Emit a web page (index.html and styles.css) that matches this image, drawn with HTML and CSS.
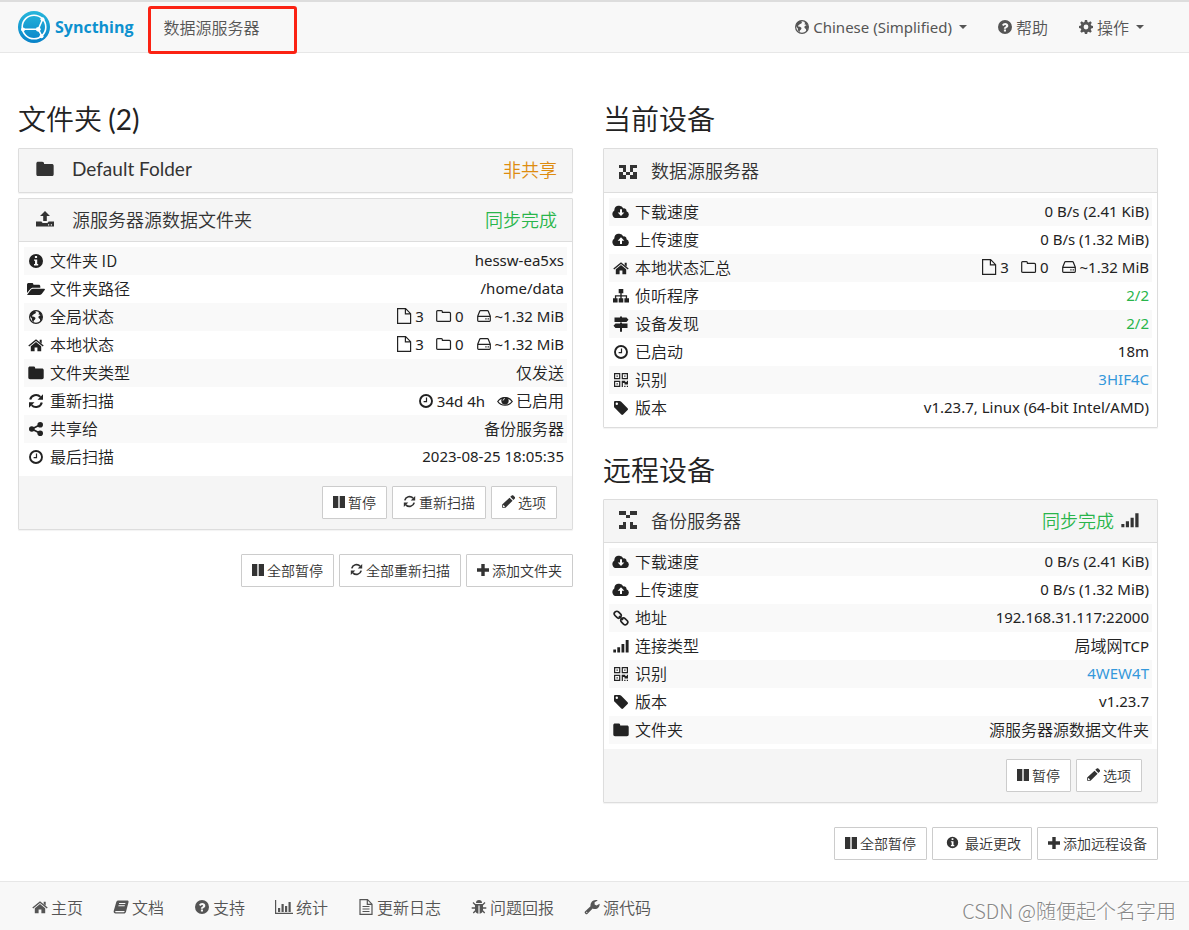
FILE: index.html
```html
<!DOCTYPE html>
<html lang="zh-CN">
<head>
<meta charset="utf-8">
<title>数据源服务器 | Syncthing</title>
<meta name="viewport" content="width=device-width, initial-scale=1">
<link rel="stylesheet" href="styles.css">
</head>
<body>
<svg class="sprite" aria-hidden="true">
  <defs>
    <linearGradient id="logo-fill" x1="0" y1="0" x2="0" y2="1"><stop offset="0" stop-color="#26b6db"/><stop offset="1" stop-color="#0882c8"/></linearGradient>
  </defs>
  <symbol id="globe" viewBox="0 0 16 16"><circle cx="8" cy="8" r="6.400" fill="none" stroke="currentColor" stroke-width="1.200"/><path d="M2.500 4.500 5 2l3-.4-.8 1.300 1 .6-1.200 1.300-1.300.3-.6 1.200-1.200.2.300 1 1.900.2 1.500 1.400-.6 1.500-1.100.9-.4 1.700-1.600-2V9.600L2.500 8 1.900 6.500z"/><path d="M10.500 2.200l2.500 1.900 1.300 3.400-.7 3.200-1.300 1.500-.4-2.100-1.300-1.100-.2-1.300.8-1 1.200-.1-.7-1-1.100.1.300-1.300z"/></symbol>
  <symbol id="info" viewBox="0 0 16 16"><path fill-rule="evenodd" d="M8 1a7 7 0 1 1 0 14A7 7 0 0 1 8 1zM6.900 2.900v2h2.200v-2zM6 6.500v1.300h1v3.300H6v1.400h4.200v-1.400H9.200V6.500z"/></symbol>
  <symbol id="question" viewBox="0 0 16 16"><path fill-rule="evenodd" d="M8 1a7 7 0 1 1 0 14A7 7 0 0 1 8 1zM5 6l1.700 1c.4-.8.8-1.100 1.400-1.100.6 0 1 .3 1 .8 0 .5-.4.700-.9 1.100-.9.500-1.300 1-1.300 2h2.100c0-.4.400-.7.900-1 .8-.5 1.400-1.100 1.400-2.100C11.300 5 9.900 4 8.200 4 6.700 4 5.700 4.700 5 6zM6.900 10.600v2H9v-2z"/></symbol>
  <symbol id="gear" viewBox="0 0 16 16"><path fill-rule="evenodd" d="M6.900 1h2.200l.4 1.900 1.200.5 1.600-1.100 1.500 1.500-1.100 1.600.5 1.200 1.800.4v2.100l-1.800.4-.5 1.200 1.100 1.600-1.500 1.500-1.600-1.100-1.200.5-.4 1.800H6.900l-.4-1.800-1.200-.5-1.600 1.100-1.500-1.500 1.100-1.600-.5-1.200L1 9.100V7l1.800-.4.500-1.200-1.100-1.600 1.500-1.500 1.600 1.100 1.200-.5zM8 5.600a2.400 2.400 0 1 0 0 4.800 2.400 2.400 0 0 0 0-4.800z"/></symbol>
  <symbol id="folder" viewBox="0 0 16 16"><path d="M2 1.500h3.500C6.600 1.500 7.200 2.100 7.200 3.500H14c1 0 1.700.6 1.700 1.600v7.500c0 1-.7 1.700-1.700 1.700H2c-1 0-1.700-.7-1.700-1.700V3.100C.3 2.100 1 1.500 2 1.500z"/></symbol>
  <symbol id="folder-open" viewBox="0 0 18 16"><path d="M0 11.900V3.500C0 2.600.700 2 1.600 2h3.300c1 0 1.500.6 1.500 1.600v.2h5.300c1 0 1.600.6 1.600 1.600v1.400H6.200c-1.300 0-2.500.6-3.300 1.700z"/><path d="M0 13.900 3.600 9c.6-.8 1.500-1.200 2.500-1.200h11c.8 0 1.100.5.600 1.200l-3 4c-.6.7-1.400 1-2.400 1H.400z"/></symbol>
  <symbol id="home" viewBox="0 0 16 16"><path d="M8 2.200 15.700 8.500l-.9 1L8 4 1.200 9.500l-.9-1z"/><path d="M11.700 2.800h2v4l-2-1.700zM8 5l5.200 4.300v4.900H9.400v-3.600H6.600v3.600H2.800V9.300z"/></symbol>
  <symbol id="refresh" viewBox="0 0 16 16"><path d="M2.200 6.600A6 6 0 0 1 12.400 3.900M13.800 9.400A6 6 0 0 1 3.600 12.100" fill="none" stroke="currentColor" stroke-width="2.100"/><path d="M15 1.300v5.500H9.500zM1 14.700V9.200h5.500z"/></symbol>
  <symbol id="share" viewBox="0 0 16 16"><path d="m12.200 3.800-8.400 4.200 8.400 4.200" fill="none" stroke="currentColor" stroke-width="1.700"/><circle cx="12.200" cy="3.800" r="2.800"/><circle cx="3.800" cy="8" r="2.800"/><circle cx="12.200" cy="12.200" r="2.800"/></symbol>
  <symbol id="clock" viewBox="0 0 16 16"><circle cx="8" cy="8" r="6" fill="none" stroke="currentColor" stroke-width="1.900"/><path d="M8.500 4.500v4.200H5.600" fill="none" stroke="currentColor" stroke-width="1.200"/></symbol>
  <symbol id="cloud-down" viewBox="0 0 18 16"><path fill-rule="evenodd" d="M4.500 14A4 4 0 0 1 2.300 6.600 4.800 4.800 0 0 1 11.400 4.400 2.600 2.600 0 0 1 14.500 7.300 3.500 3.500 0 0 1 14.200 14zM8 5.200v3.300H5.700L9 12l3.300-3.500H10V5.200z"/></symbol>
  <symbol id="cloud-up" viewBox="0 0 18 16"><path fill-rule="evenodd" d="M4.500 14A4 4 0 0 1 2.300 6.600 4.800 4.800 0 0 1 11.400 4.400 2.600 2.600 0 0 1 14.500 7.300 3.500 3.500 0 0 1 14.200 14zM8 12V8.700H5.700L9 5.200l3.300 3.500H10V12z"/></symbol>
  <symbol id="sitemap" viewBox="0 0 16 16"><path d="M5.700 1h4.600v4.300H8.700v2h5.400v3H16v4.200h-4.600v-4.200h1.400V8.500H8.700v1.800h1.600v4.200H5.700v-4.200h1.600V8.500H3.200v1.800h1.400v4.200H0v-4.200h1.900v-3h5.400v-2H5.700z"/></symbol>
  <symbol id="signs" viewBox="0 0 16 16"><path d="M7 .500h2V1.500h4.500L15.500 3.700l-2 2.200h-12V1.500H7zM7 6.500h2V7.500h5.500v4.400H9v3.900H7V11.900H2.500L.500 9.700l2-2.200H7z"/></symbol>
  <symbol id="qr" viewBox="0 0 16 16"><path fill-rule="evenodd" d="M1 1h6.300v6.300H1zM2.200 2.200V6.100H6.100V2.200zM8.700 1H15v6.300H8.700zM9.900 2.200V6.100h3.900V2.200zM1 8.700h6.300V15H1zM2.200 9.900v3.900H6.100V9.900zM3.500 3.500h1.300v1.300H3.500zM11.200 3.500h1.300v1.300h-1.300zM3.500 11.200h1.300v1.300H3.500zM8.700 8.700h3.600v1.200h1.500V8.700H15v3.700h-3.500v-1.300H9.900V15H8.700zM11.200 13.800h1.300V15h-1.300zM13.800 13.800H15V15h-1.200z"/></symbol>
  <symbol id="tag" viewBox="0 0 16 16"><path fill-rule="evenodd" d="M1 2.200C1 1.500 1.500 1 2.200 1h4.200c.6 0 1.300.3 1.800.8l6.400 6.400c.5.500.5 1.300 0 1.800l-4.500 4.500c-.5.500-1.300.5-1.800 0L1.900 8.100C1.400 7.700 1 7 1 6.400zM3.800 2.600a1.200 1.200 0 1 0 0 2.400 1.200 1.200 0 0 0 0-2.400z"/></symbol>
  <symbol id="link" viewBox="0 0 16 16"><g fill="none" stroke="currentColor" stroke-width="1.700"><rect x="1" y="2.200" width="7.400" height="5" rx="2.300" transform="rotate(45 4.700 4.700)"/><rect x="7.600" y="8.800" width="7.400" height="5" rx="2.300" transform="rotate(45 11.300 11.300)"/><path d="m6 6 4 4"/></g></symbol>
  <symbol id="signal" viewBox="0 0 16 16"><path d="M.300 11.500h2.700v3H.300zM4.300 9.200h2.800v5.300H4.300zM8.500 6h2.800v8.500H8.500zM12.700 2h2.900v12.500h-2.900z"/></symbol>
  <symbol id="file" viewBox="0 0 16 16"><path d="M1.600.700h8l5 5v9.700h-13zM9.400.700v5.200h5.200" fill="none" stroke="currentColor" stroke-width="1.200"/></symbol>
  <symbol id="folder-line" viewBox="0 0 16 16"><path d="M1.600 2.600h3.800c.7 0 1 .4 1 1.100v.7h7c.7 0 1.100.4 1.100 1v7c0 .7-.4 1-1.100 1H1.700c-.7 0-1-.3-1-1V3.600c0-.6.300-1 .9-1z" fill="none" stroke="currentColor" stroke-width="1.200"/></symbol>
  <symbol id="disk" viewBox="0 0 16 16"><path d="M1.700 8.300h12.600v4.300c0 .5-.3.800-.8.800h-11c-.5 0-.8-.3-.8-.8zM1.700 8.300l2-5c.1-.4.400-.6.800-.6h7c.4 0 .7.200.8.600l2 5" fill="none" stroke="currentColor" stroke-width="1.200"/><path d="M9.300 10.200h1.300v1.300H9.300zM11.600 10.200h1.300v1.300h-1.300z"/></symbol>
  <symbol id="eye" viewBox="0 0 16 16"><path d="M.800 8.500C4 3.200 12 3.200 15.200 8.500 12 13.400 4 13.400.800 8.500z" fill="none" stroke="currentColor" stroke-width="1.300"/><circle cx="8" cy="7.800" r="3.700"/><path d="M6 7.600A2 2 0 0 1 8 5.600" fill="none" stroke="#fff" stroke-width=".8"/></symbol>
  <symbol id="pause" viewBox="0 0 12 12"><path d="M0 0h5.300v12H0zM6.700 0H12v12H6.700z"/></symbol>
  <symbol id="pencil" viewBox="1 1 14 14"><path fill-rule="evenodd" d="M11.500 1.600c.5-.5 1.200-.5 1.700 0l1.600 1.600c.5.500.5 1.200 0 1.700l-1.500 1.500-3.400-3.400zM9.100 3.900l3.300 3.300-7.600 7.600H1.200v-3.600zM2.600 11.800l-.5.600v1.500h1.500l.6-.6z"/></symbol>
  <symbol id="plus" viewBox="1 1 12 12"><path d="M5.300 1h3.400v4.300H13v3.400H8.700V13H5.300V8.700H1V5.300h4.300z"/></symbol>
  <symbol id="upload" viewBox="0 0 18 18"><path fill-rule="evenodd" d="M9 1l5 5h-3.200v5H7.200V6H4zM0 11.500h5.500c.5 1.200 1.300 1.500 2 1.500h3c.8 0 1.600-.3 2-1.500H18v5H0zM12 14.300v1.200h1.200v-1.200zM14.800 14.300v1.200H16v-1.200z"/></symbol>
  <symbol id="book" viewBox="0 0 16 16"><path fill-rule="evenodd" d="M5.500 1.500h8.800c1 0 1.500.7 1.200 1.700l-2.500 9.500c-.3 1.200-1 1.800-2.200 1.800H2.600C1.300 14.500.300 13.300.700 12L3.200 3.300C3.500 2.100 4.300 1.500 5.500 1.500zM6.200 4l-.3 1h6.300l.3-1zM5.600 6.300l-.3 1h6.300l.3-1zM2.300 11.900c-.2.800.2 1.300.9 1.300h7.300c.5 0 .9-.3 1-.7l.3-.6z"/></symbol>
  <symbol id="chart" viewBox="0 0 18 16"><path d="M0 1h1.200v12.800H18V15H0zM3 9h2.200v4H3zM6.500 5h2.200v8H6.500zM10 7h2.200v6H10zM13.500 3h2.200v10h-2.200z"/></symbol>
  <symbol id="file-text" viewBox="0 0 16 16"><path d="M2 .700h7.500l4.500 4.500v10.100H2zM9.300.700v4.700H14M4.500 7.500h7M4.500 10h7M4.500 12.500h7" fill="none" stroke="currentColor" stroke-width="1.200"/></symbol>
  <symbol id="bug" viewBox="0 0 16 16"><path d="M5 4a3 3 0 0 1 6 0zM4 5h8v6c0 2-1.400 3.500-3.400 3.700V6.500H7.400v8.200C5.400 14.500 4 13 4 11z"/><path d="M4.500 6 2 3.500M11.500 6 14 3.500M4.500 9H.700M11.500 9h3.800M4.700 11.500 2.300 14M11.300 11.500l2.400 2.500" fill="none" stroke="currentColor" stroke-width="1.300"/></symbol>
  <symbol id="wrench" viewBox="0 0 16 16"><path fill-rule="evenodd" d="M8.700 9.500 3.300 14.900c-.5.500-1.200.5-1.700 0l-.6-.6c-.5-.5-.5-1.200 0-1.700L6.500 7.200C6.200 3.700 8.700.800 12 1c.6 0 1.200.2 1.700.4L10.600 3.300v2.200l1.900 1 3.100-1.800c.4 3-2.100 5.600-5 5.400-.7 0-1.300-.2-1.900-.6zM2.700 12.700a.6.600 0 1 0 .1 1.200.6.600 0 0 0-.1-1.200z"/></symbol>
</svg>

<header class="navbar">
  <a class="brand" href="#">
    <svg class="brand-mark" viewBox="0 0 32 32" aria-hidden="true">
      <circle cx="16" cy="16" r="16" fill="url(#logo-fill)"/>
      <g fill="none" stroke="#fff" stroke-width="1.600"><circle cx="16" cy="16" r="11.800"/><path d="M20.300 18.300 24.500 8.500M20.300 18.300 6 18.300M20.300 18.300 23.800 25"/></g>
      <g fill="#fff"><circle cx="20.300" cy="18.300" r="2.400"/><circle cx="24.500" cy="8.300" r="2"/><circle cx="5" cy="18.500" r="2"/><circle cx="23.500" cy="25.200" r="2"/></g>
    </svg>
    <span>Syncthing</span>
  </a>
  <p class="device-name">数据源服务器</p>
  <nav class="nav-links">
    <button class="nav-link" type="button"><svg class="icon"><use href="#globe"/></svg><span class="latin">Chinese (Simplified)</span><i class="caret"></i></button>
    <a class="nav-link" href="#"><svg class="icon"><use href="#question"/></svg>帮助</a>
    <button class="nav-link" type="button"><svg class="icon"><use href="#gear"/></svg>操作<i class="caret"></i></button>
  </nav>
</header>

<main class="content">
  <section class="column">
    <h2>文件夹 <span class="count">(2)</span></h2>
    <div class="panel">
      <button class="panel-heading" type="button"><svg class="icon title-icon"><use href="#folder"/></svg><span class="title title-latin">Default Folder</span><span class="status warning">非共享</span></button>
    </div>
    <div class="panel">
      <button class="panel-heading open" type="button"><svg class="icon title-icon"><use href="#upload"/></svg><span class="title">源服务器源数据文件夹</span><span class="status success">同步完成</span></button>
      <table class="details">
        <tr><th scope="row"><svg class="icon"><use href="#info"/></svg>文件夹 ID</th><td class="latin">hessw-ea5xs</td></tr>
        <tr><th scope="row"><svg class="icon wide"><use href="#folder-open"/></svg>文件夹路径</th><td class="latin">/home/data</td></tr>
        <tr><th scope="row"><svg class="icon"><use href="#globe"/></svg>全局状态</th><td class="latin"><span class="stat"><svg class="icon"><use href="#file"/></svg>3</span><span class="stat"><svg class="icon"><use href="#folder-line"/></svg>0</span><span class="stat"><svg class="icon"><use href="#disk"/></svg>~1.32 MiB</span></td></tr>
        <tr><th scope="row"><svg class="icon"><use href="#home"/></svg>本地状态</th><td class="latin"><span class="stat"><svg class="icon"><use href="#file"/></svg>3</span><span class="stat"><svg class="icon"><use href="#folder-line"/></svg>0</span><span class="stat"><svg class="icon"><use href="#disk"/></svg>~1.32 MiB</span></td></tr>
        <tr><th scope="row"><svg class="icon"><use href="#folder"/></svg>文件夹类型</th><td>仅发送</td></tr>
        <tr><th scope="row"><svg class="icon"><use href="#refresh"/></svg>重新扫描</th><td><span class="stat latin"><svg class="icon"><use href="#clock"/></svg>34d 4h</span><span class="stat"><svg class="icon"><use href="#eye"/></svg>已启用</span></td></tr>
        <tr><th scope="row"><svg class="icon"><use href="#share"/></svg>共享给</th><td>备份服务器</td></tr>
        <tr><th scope="row"><svg class="icon"><use href="#clock"/></svg>最后扫描</th><td class="latin">2023-08-25 18:05:35</td></tr>
      </table>
      <div class="panel-footer">
        <button class="btn" type="button"><svg class="icon pause"><use href="#pause"/></svg>暂停</button>
        <button class="btn" type="button"><svg class="icon"><use href="#refresh"/></svg>重新扫描</button>
        <button class="btn" type="button"><svg class="icon"><use href="#pencil"/></svg>选项</button>
      </div>
    </div>
    <div class="actions">
      <button class="btn" type="button"><svg class="icon pause"><use href="#pause"/></svg>全部暂停</button>
      <button class="btn" type="button"><svg class="icon"><use href="#refresh"/></svg>全部重新扫描</button>
      <button class="btn" type="button"><svg class="icon pause"><use href="#plus"/></svg>添加文件夹</button>
    </div>
  </section>

  <section class="column">
    <h2>当前设备</h2>
    <div class="panel">
      <button class="panel-heading open device this-device" type="button"><svg class="icon title-icon" viewBox="0 0 5 5" shape-rendering="crispEdges"><path d="M0 1h2v1H0zM3 1h2v1H3zM1 2h1v1H1zM3 2h1v1H3zM2 3h1v1H2zM0 3h1v1H0zM4 3h1v1H4zM0 4h2v1H0zM3 4h2v1H3z"/></svg><span class="title">数据源服务器</span></button>
      <table class="details">
        <tr><th scope="row"><svg class="icon wide"><use href="#cloud-down"/></svg>下载速度</th><td class="latin">0 B/s (2.41 KiB)</td></tr>
        <tr><th scope="row"><svg class="icon wide"><use href="#cloud-up"/></svg>上传速度</th><td class="latin">0 B/s (1.32 MiB)</td></tr>
        <tr><th scope="row"><svg class="icon"><use href="#home"/></svg>本地状态汇总</th><td class="latin"><span class="stat"><svg class="icon"><use href="#file"/></svg>3</span><span class="stat"><svg class="icon"><use href="#folder-line"/></svg>0</span><span class="stat"><svg class="icon"><use href="#disk"/></svg>~1.32 MiB</span></td></tr>
        <tr><th scope="row"><svg class="icon"><use href="#sitemap"/></svg>侦听程序</th><td class="latin success">2/2</td></tr>
        <tr><th scope="row"><svg class="icon"><use href="#signs"/></svg>设备发现</th><td class="latin success">2/2</td></tr>
        <tr><th scope="row"><svg class="icon"><use href="#clock"/></svg>已启动</th><td class="latin">18m</td></tr>
        <tr><th scope="row"><svg class="icon"><use href="#qr"/></svg>识别</th><td class="latin"><a href="#">3HIF4C</a></td></tr>
        <tr><th scope="row"><svg class="icon"><use href="#tag"/></svg>版本</th><td class="latin">v1.23.7, Linux (64-bit Intel/AMD)</td></tr>
      </table>
    </div>

    <h2 class="spaced">远程设备</h2>
    <div class="panel">
      <button class="panel-heading open device" type="button"><svg class="icon title-icon" viewBox="0 0 5 5" shape-rendering="crispEdges"><path d="M0 0h2v1H0zM3 0h2v1H3zM2 1h1v1H2zM1 3h1v1H1zM3 3h1v1H3zM0 4h2v1H0zM3 4h2v1H3z"/></svg><span class="title">备份服务器</span><span class="status success">同步完成</span><svg class="icon title-icon signal"><use href="#signal"/></svg></button>
      <table class="details">
        <tr><th scope="row"><svg class="icon wide"><use href="#cloud-down"/></svg>下载速度</th><td class="latin">0 B/s (2.41 KiB)</td></tr>
        <tr><th scope="row"><svg class="icon wide"><use href="#cloud-up"/></svg>上传速度</th><td class="latin">0 B/s (1.32 MiB)</td></tr>
        <tr><th scope="row"><svg class="icon"><use href="#link"/></svg>地址</th><td class="latin">192.168.31.117:22000</td></tr>
        <tr><th scope="row"><svg class="icon"><use href="#signal"/></svg>连接类型</th><td>局域网<span class="latin">TCP</span></td></tr>
        <tr><th scope="row"><svg class="icon"><use href="#qr"/></svg>识别</th><td class="latin"><a href="#">4WEW4T</a></td></tr>
        <tr><th scope="row"><svg class="icon"><use href="#tag"/></svg>版本</th><td class="latin">v1.23.7</td></tr>
        <tr><th scope="row"><svg class="icon"><use href="#folder"/></svg>文件夹</th><td>源服务器源数据文件夹</td></tr>
      </table>
      <div class="panel-footer">
        <button class="btn" type="button"><svg class="icon pause"><use href="#pause"/></svg>暂停</button>
        <button class="btn" type="button"><svg class="icon"><use href="#pencil"/></svg>选项</button>
      </div>
    </div>
    <div class="actions">
      <button class="btn" type="button"><svg class="icon pause"><use href="#pause"/></svg>全部暂停</button>
      <button class="btn roomy" type="button"><svg class="icon"><use href="#info"/></svg>最近更改</button>
      <button class="btn" type="button"><svg class="icon pause"><use href="#plus"/></svg>添加远程设备</button>
    </div>
  </section>
</main>

<footer class="footer">
  <a class="nav-link" href="#"><svg class="icon"><use href="#home"/></svg>主页</a>
  <a class="nav-link" href="#"><svg class="icon"><use href="#book"/></svg>文档</a>
  <a class="nav-link" href="#"><svg class="icon"><use href="#question"/></svg>支持</a>
  <a class="nav-link" href="#"><svg class="icon wide"><use href="#chart"/></svg>统计</a>
  <a class="nav-link" href="#"><svg class="icon"><use href="#file-text"/></svg>更新日志</a>
  <a class="nav-link" href="#"><svg class="icon"><use href="#bug"/></svg>问题回报</a>
  <a class="nav-link" href="#"><svg class="icon"><use href="#wrench"/></svg>源代码</a>
  <span class="watermark">CSDN @随便起个名字用</span>
</footer>
</body>
</html>
```

FILE: styles.css
```css
* {
  box-sizing: border-box;
}

body {
  margin: 0;
  min-height: 100vh;
  display: flex;
  flex-direction: column;
  background: #fff;
  color: #222;
  font: 350 16px/20px "Noto Sans CJK SC", sans-serif;
}

button {
  font: inherit;
  color: inherit;
  border: 0;
  background: none;
  cursor: pointer;
}

a {
  color: #3498db;
  text-decoration: none;
}

.latin {
  font-family: "Noto Sans", "Noto Sans CJK SC", sans-serif;
  font-size: 15px;
  font-weight: 400;
}

.success {
  color: #29b54b;
}

.warning {
  color: #de8c0f;
}

.sprite {
  position: absolute;
  width: 0;
  height: 0;
}

.icon {
  flex: none;
  width: 16px;
  height: 16px;
  fill: currentColor;
}

.icon.wide {
  width: 18px;
}

/* Top bar */
.navbar {
  display: flex;
  align-items: center;
  height: 53px;
  padding: 0 30px 1px 18px;
  border-top: 2px solid #ddd;
  border-bottom: 1px solid #e7e7e7;
  background: #f8f8f8;
}

.brand {
  display: flex;
  align-items: center;
  gap: 5px;
  color: #0d91cf;
  font: 700 16px/20px "Open Sans", sans-serif;
}

.brand-mark {
  width: 32px;
  height: 32px;
}

.device-name {
  position: relative;
  margin: 0 0 0 30px;
  color: #555;
}

.device-name::after {
  content: "";
  position: absolute;
  inset: -11px -37px -17px -16px;
  border: 3px solid #fb2213;
  border-radius: 3px;
}

.nav-links {
  display: flex;
  margin-left: auto;
}

.nav-link {
  display: flex;
  align-items: center;
  gap: 3px;
  padding: 10px 15px;
  color: #555;
}

.caret {
  margin-left: 4px;
  border: 4px solid transparent;
  border-top-color: currentColor;
  border-bottom: 0;
}

/* Page body */
.content {
  flex: 1;
  display: grid;
  grid-template-columns: 1fr 1fr;
  gap: 30px;
  padding: 45px 31px 21px 18px;
}

h2 {
  margin: 0 0 10px;
  font: 350 28px/40px "Noto Sans CJK SC", sans-serif;
}

h2.spaced {
  margin-top: 21px;
}

.count {
  font-family: Lato, sans-serif;
  font-weight: 400;
  line-height: 1;
}

.panel {
  border: 1px solid #ddd;
  border-radius: 1px;
  box-shadow: 0 1px 1px #0000000d;
}

.panel + .panel {
  margin-top: 5px;
}

.panel-heading {
  display: flex;
  align-items: center;
  width: 100%;
  height: 43px;
  padding: 0 15px 3px 17px;
  background: #f5f5f5;
  color: #333;
  font: 350 18px/20px "Noto Sans CJK SC", sans-serif;
  text-align: left;
}

.panel-heading.open {
  border-bottom: 1px solid #ddd;
}

.title-icon {
  width: 18px;
  height: 18px;
}

.title {
  flex: 1;
  margin-left: 18px;
}

.title-latin {
  font: 400 19px/20px Lato, sans-serif;
}

.panel-heading.device {
  padding: 0 18px 2px 15px;
}

.panel-heading.this-device {
  height: 44px;
}

.device .title {
  margin-left: 14px;
}

.signal {
  margin-left: 7px;
}

.details {
  width: calc(100% - 10px);
  margin: 5px;
  border-collapse: collapse;
}

.details tr:nth-child(odd) {
  background: #f9f9f9;
}

.details th,
.details td {
  height: 28px;
  padding: 0 3px 2px;
  text-align: right;
  white-space: nowrap;
}

.details th {
  font-weight: 350;
  text-align: left;
}

.details .icon {
  vertical-align: -2px;
}

.details th .icon {
  margin: 0 6px 0 1px;
}

.details th .icon.wide {
  margin: 0 5px 0 0;
}

.details .stat .icon {
  margin: 0 3px 0 0;
}

.stat {
  margin-left: 12px;
}

.panel-footer {
  display: flex;
  justify-content: flex-end;
  gap: 5px;
  padding: 10px 15px;
  background: #f5f5f5;
}

.actions {
  display: flex;
  justify-content: flex-end;
  gap: 5px;
  margin-top: 24px;
}

.btn {
  display: flex;
  align-items: center;
  gap: 3px;
  height: 33px;
  padding: 0 10px 2px;
  border: 1px solid #ccc;
  border-radius: 1px;
  background: #fff;
  color: #333;
  font-size: 14px;
}

.btn .icon {
  width: 13px;
  height: 13px;
}

.btn .icon.pause {
  width: 12px;
  height: 12px;
}

.btn.roomy {
  gap: 6px;
  padding: 0 10px 2px 13px;
}

/* Bottom bar */
.footer {
  position: relative;
  display: flex;
  align-items: center;
  height: 49px;
  padding: 2px 17px 0;
  border-top: 1px solid #e7e7e7;
  background: #f8f8f8;
}

.watermark {
  position: absolute;
  right: 13px;
  bottom: 7px;
  color: #888;
  font: 300 20px/24px "Noto Sans CJK SC", sans-serif;
  text-shadow: 1px 1px #fff;
}
```
